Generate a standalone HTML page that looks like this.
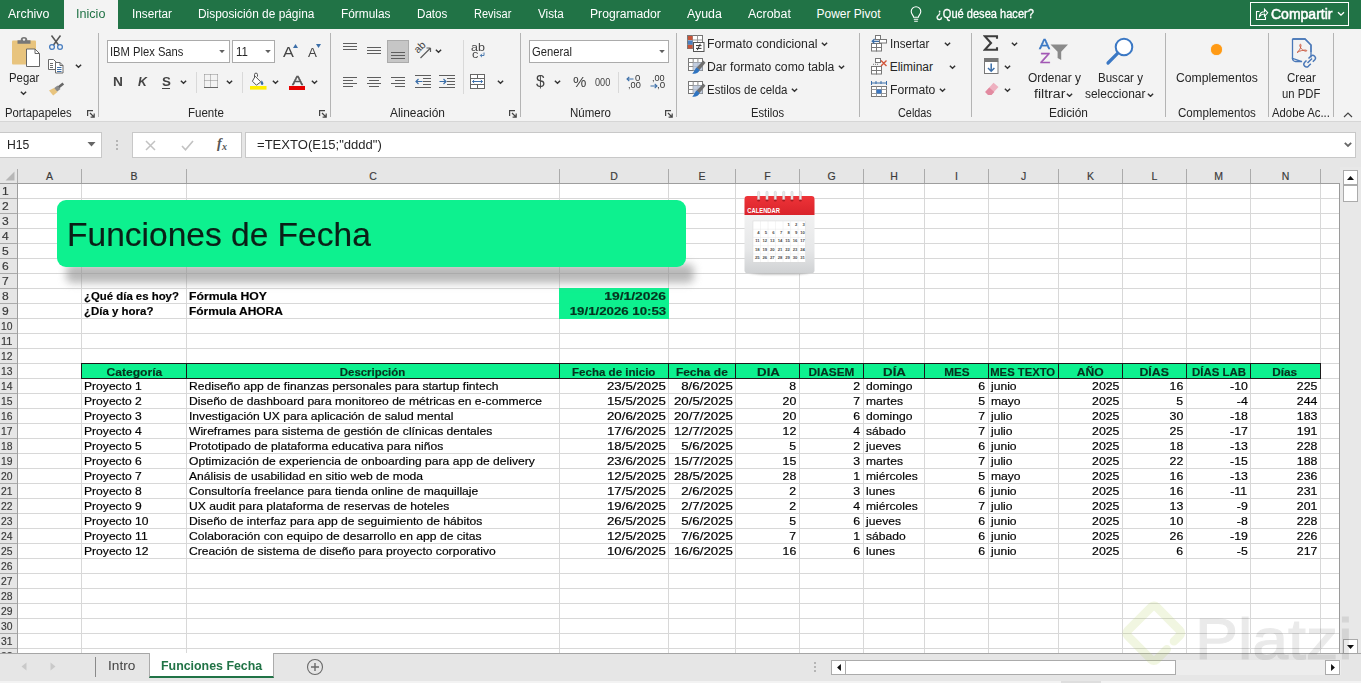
<!DOCTYPE html>
<html lang="es"><head><meta charset="utf-8"><title>Funciones de Fecha - Excel</title>
<style>
html,body{margin:0;padding:0;width:1361px;height:683px;overflow:hidden;background:#fff;font-family:"Liberation Sans",sans-serif;color:#262626}
div,span,svg{position:absolute;box-sizing:border-box}
.t{white-space:pre;line-height:16px;height:16px;font-size:12px}
#tabs{left:0;top:0;width:1361px;height:29px;background:#217346}
#tabs .t{color:#fff}
#tabon{left:64px;top:0;width:54px;height:29px;background:#f3f3f3}
#ribbon{left:0;top:29px;width:1361px;height:93px;background:#f3f3f3;border-bottom:1px solid #d6d6d6}
#fbar{left:0;top:122px;width:1361px;height:45px;background:#e6e6e6}
.wbox{background:#fff;border:1px solid #c8c8c8}
.ibox{background:#fff;border:1px solid #ababab}
.vsep{width:1px;background:#c6c6c6;top:33px;height:84px}
.vsep2{width:1px;background:#d4d4d4}
#colhdr{left:0;top:167px;width:1340px;height:17px;background:#e6e6e6;border-bottom:1px solid #9e9e9e}
#rowhdr{left:0;top:184px;width:18px;height:469px;background:#e6e6e6;border-right:1px solid #9e9e9e}
#grid{left:18px;top:184px;width:1322px;height:469px;background:#fff;overflow:hidden}
.hl{left:0;width:1322px;height:1px;background:#d8d8d8}
.vl{top:0;width:1px;height:469px;background:#d8d8d8}
.ch{color:#3b3b3b}
.cs{width:1px;top:3px;height:14px;background:#ababab}
.rs{left:0;width:17px;height:1px;background:#ababab}
#sheet .t{color:#000;-webkit-text-stroke-width:.18px}
.hc{background:#0df18f;border:1px solid #111;height:16px;top:363px}
#vscroll{left:1340px;top:167px;width:21px;height:486px;background:#e8e8e8}
#btm{left:0;top:653px;width:1361px;height:28px;background:#e6e6e6;border-top:1px solid #a6a6a6}
#status{left:0;top:681px;width:1361px;height:2px;background:#f3f3f3}
.sbtn{background:#fff;border:1px solid #ababab}
#sheet{position:static}

</style></head>
<body>
<div id="tabs"></div><div id="tabon"></div>
<span class="t" style="left:7.5px;transform-origin:0 50%;top:6.0px;font-size:12px;transform:scaleX(1.035);color:#fff;">Archivo</span>
<span class="t" style="left:75.5px;transform-origin:0 50%;top:6.0px;font-size:12px;transform:scaleX(1.049);color:#217346;">Inicio</span>
<span class="t" style="left:131.5px;transform-origin:0 50%;top:6.0px;font-size:12px;transform:scaleX(0.981);color:#fff;">Insertar</span>
<span class="t" style="left:198.0px;transform-origin:0 50%;top:6.0px;font-size:12px;transform:scaleX(0.991);color:#fff;">Disposición de página</span>
<span class="t" style="left:341.0px;transform-origin:0 50%;top:6.0px;font-size:12px;transform:scaleX(0.988);color:#fff;">Fórmulas</span>
<span class="t" style="left:417.0px;transform-origin:0 50%;top:6.0px;font-size:12px;transform:scaleX(0.969);color:#fff;">Datos</span>
<span class="t" style="left:474.0px;transform-origin:0 50%;top:6.0px;font-size:12px;transform:scaleX(0.919);color:#fff;">Revisar</span>
<span class="t" style="left:537.5px;transform-origin:0 50%;top:6.0px;font-size:12px;transform:scaleX(0.979);color:#fff;">Vista</span>
<span class="t" style="left:590.0px;transform-origin:0 50%;top:6.0px;font-size:12px;transform:scaleX(1.012);color:#fff;">Programador</span>
<span class="t" style="left:686.5px;transform-origin:0 50%;top:6.0px;font-size:12px;transform:scaleX(1.032);color:#fff;">Ayuda</span>
<span class="t" style="left:747.5px;transform-origin:0 50%;top:6.0px;font-size:12px;transform:scaleX(1.037);color:#fff;">Acrobat</span>
<span class="t" style="left:816.5px;transform-origin:0 50%;top:6.0px;font-size:12px;color:#fff;">Power Pivot</span>
<span class="t" style="left:935.5px;transform-origin:0 50%;top:6.0px;font-size:12px;transform:scaleX(0.923);color:#fff;-webkit-text-stroke:.3px #fff">¿Qué desea hacer?</span>
<svg style="left:909px;top:5px" width="14" height="18" viewBox="0 0 14 18" fill="none" stroke="#fff" stroke-width="1.1"><path d="M4.6 12.2c0-1.6-2.4-2.8-2.4-5.6a4.8 4.8 0 0 1 9.6 0c0 2.8-2.4 4-2.4 5.6z"/><path d="M4.8 14.2h4.4M5.2 16.2h3.6"/></svg>
<div style="left:1250px;top:2px;width:99px;height:24px;border:1px solid #fff"></div>
<svg style="left:1255px;top:7px" width="14" height="14" viewBox="0 0 14 14" fill="none" stroke="#fff" stroke-width="1.1"><path d="M4.5 4.5H1.5v8h9V9.5"/><path d="M4.5 9.5c.3-3 2-4.8 5-4.8V2.2l3.2 3.6-3.2 3.6V7c-2.2 0-3.8.8-5 2.5z"/></svg>
<span class="t" style="left:1270.9px;transform-origin:0 50%;top:6.0px;font-size:14.5px;transform:scaleX(0.966);color:#fff;-webkit-text-stroke:.55px #fff">Compartir</span>
<svg style="left:1337px;top:11px" width="8" height="6" viewBox="0 0 8 6" fill="none" stroke="#fff" stroke-width="1.3"><path d="M1 1.2l3 3 3-3"/></svg>
<div id="fbar"></div>
<div class="wbox" style="left:-1px;top:132px;width:103px;height:26px"></div>
<span class="t" style="left:7.3px;transform-origin:0 50%;top:137.0px;font-size:12.5px;transform:scaleX(0.977);color:#262626">H15</span>
<svg style="left:87px;top:142px" width="9" height="5" viewBox="0 0 9 5"><path d="M0.5 0h8L4.5 4.5z" fill="#666"/></svg>
<div style="left:116px;top:140px;width:2px;height:2px;background:#b5b5b5"></div>
<div style="left:116px;top:144px;width:2px;height:2px;background:#b5b5b5"></div>
<div style="left:116px;top:148px;width:2px;height:2px;background:#b5b5b5"></div>
<div class="wbox" style="left:132px;top:132px;width:110px;height:26px"></div>
<svg style="left:145px;top:140px" width="11" height="11" viewBox="0 0 11 11" stroke="#c2c2c2" stroke-width="1.5" fill="none"><path d="M1 1l9 9M10 1l-9 9"/></svg>
<svg style="left:181px;top:140px" width="13" height="11" viewBox="0 0 13 11" stroke="#c2c2c2" stroke-width="1.6" fill="none"><path d="M1 6l3.5 3.8L12 1"/></svg>
<span class="t" style="left:217px;top:136px;font-family:'Liberation Serif',serif;font-style:italic;font-size:14px;color:#555;font-weight:bold">f</span>
<span class="t" style="left:222px;top:139px;font-family:'Liberation Serif',serif;font-style:italic;font-size:10px;color:#555;font-weight:bold">x</span>
<div class="wbox" style="left:245px;top:132px;width:1111px;height:26px"></div>
<span class="t" style="left:256.5px;transform-origin:0 50%;top:137.0px;font-size:12.5px;transform:scaleX(1.045);color:#262626">=TEXTO(E15;&quot;dddd&quot;)</span>
<svg style="left:1343.500px;top:142px" width="8" height="5.600" viewBox="0 0 10 7" fill="none" stroke="#666" stroke-width="2.200"><path d="M1 1l4 4 4-4"/></svg><div id="ribbon"></div>
<svg style="left:10.0px;top:35.0px" width="32" height="34" viewBox="0 0 32 34"><rect x="2" y="5.5" width="24" height="24" rx="1" fill="#e8c47e"/><path d="M7.5 8.8V5.2h3.2a3.3 3.3 0 0 1 6.6 0h3.2v3.6z" fill="#777"/><circle cx="14" cy="4.6" r="1.2" fill="#f3f3f3"/><path d="M16.5 14h8.5l4.5 4.5V31.5H16.5z" fill="#fff" stroke="#666" stroke-width="1"/><path d="M25 14v4.5h4.5" fill="none" stroke="#666" stroke-width="1"/></svg>
<span class="t" style="left:9.1px;transform-origin:0 50%;top:70.3px;font-size:12px;transform:scaleX(0.946);color:#262626;">Pegar</span>
<svg style="left:20.3px;top:91.3px" width="7" height="4.400" viewBox="0 0 8 5" fill="none" stroke="#333" stroke-width="1.600"><path d="M1 0.8l3 3 3-3"/></svg>
<svg style="left:48.0px;top:34.0px" width="16" height="17" viewBox="0 0 16 17"><path d="M3.5 1.5l7.2 9.8M12.5 1.5L5.3 11.3" stroke="#555" stroke-width="1.5" fill="none"/><circle cx="4" cy="13" r="2.4" fill="none" stroke="#4a7fc1" stroke-width="1.3"/><circle cx="12" cy="13" r="2.4" fill="none" stroke="#4a7fc1" stroke-width="1.3"/></svg>
<svg style="left:48.0px;top:59.0px" width="17" height="16" viewBox="0 0 17 16"><path d="M0.500 0.500h5l2.500 2.500v7.500h-7.500z" fill="#fff" stroke="#6a6a6a" stroke-width="1"/><path d="M2 4.500h3M2 6.500h3M2 8.500h3" stroke="#6a6a6a" stroke-width="1"/><path d="M7.500 3.500h4.500l3 3v7.500h-7.500z" fill="#fff" stroke="#6a6a6a" stroke-width="1"/><path d="M12 3.500v3h3" fill="none" stroke="#6a6a6a" stroke-width="1"/><path d="M9 8.500h4.500M9 10.500h4.500M9 12.500h4.500" stroke="#3b6ea8" stroke-width="1"/></svg>
<svg style="left:75.2px;top:64.3px" width="7" height="4.400" viewBox="0 0 8 5" fill="none" stroke="#333" stroke-width="1.600"><path d="M1 0.8l3 3 3-3"/></svg>
<svg style="left:48.0px;top:81.0px" width="17" height="16" viewBox="0 0 17 16"><path d="M9.5 5.5l5-4 1.6 2-5 4z" fill="#666"/><path d="M6 7.2l3.5-2.8 3 3.6L9 10.8z" fill="#8a8a8a"/><path d="M1 9.5l5-2.6 3.5 4.2L5.2 14.5z" fill="#e8c47e"/></svg>
<span class="t" style="left:5.3px;transform-origin:0 50%;top:105.4px;font-size:12px;transform:scaleX(0.943);color:#262626;">Portapapeles</span>
<svg style="left:87.0px;top:109.5px" width="8" height="8" viewBox="0 0 8 8" fill="none" stroke="#444" stroke-width="1.2"><path d="M0.6 6V0.6H6"/><path d="M3 3l4 4M7.2 3.6V7.2H3.6"/></svg>
<div style="left:98px;top:33px;width:1px;height:84px;background:#b4b4b4"></div>
<div class="ibox" style="left:107px;top:40px;width:123px;height:23px"></div>
<span class="t" style="left:110.0px;transform-origin:0 50%;top:43.5px;font-size:12px;transform:scaleX(0.933);color:#262626;">IBM Plex Sans</span>
<svg style="left:219.0px;top:49.8px" width="6" height="3.400" viewBox="0 0 7 4"><path d="M0.200 0h6.600L3.5 3.700z" fill="#606060"/></svg>
<div class="ibox" style="left:232px;top:40px;width:43px;height:23px"></div>
<span class="t" style="left:235.5px;transform-origin:0 50%;top:43.5px;font-size:12px;transform:scaleX(0.954);color:#262626;">11</span>
<svg style="left:264.5px;top:49.8px" width="6" height="3.400" viewBox="0 0 7 4"><path d="M0.200 0h6.600L3.5 3.700z" fill="#606060"/></svg>
<span class="t" style="left:282.5px;transform-origin:0 50%;top:44.0px;font-size:15px;transform:scaleX(1.088);color:#444;">A</span>
<svg style="left:292.5px;top:43.5px" width="5" height="4" viewBox="0 0 5 4"><path d="M0 4h5L2.5 0z" fill="#3b6ea8"/></svg>
<span class="t" style="left:307.5px;transform-origin:0 50%;top:45.0px;font-size:12.5px;transform:scaleX(1.067);color:#444;">A</span>
<svg style="left:315.5px;top:44.0px" width="5" height="4" viewBox="0 0 5 4"><path d="M0 0h5L2.5 4z" fill="#3b6ea8"/></svg>
<span class="t" style="left:112.5px;transform-origin:0 50%;top:74.0px;font-size:12.5px;transform:scaleX(1.096);color:#444;font-weight:bold;">N</span>
<span class="t" style="left:137.5px;transform-origin:0 50%;top:74.0px;font-size:12.5px;transform:scaleX(0.985);color:#444;font-weight:bold;font-style:italic;">K</span>
<span class="t" style="left:161.5px;transform-origin:0 50%;top:73.5px;font-size:12.5px;transform:scaleX(1.067);color:#444;font-weight:bold;">S</span>
<div style="left:162px;top:88px;width:8px;height:1px;background:#444"></div>
<svg style="left:180.0px;top:80.3px" width="7" height="4.400" viewBox="0 0 8 5" fill="none" stroke="#333" stroke-width="1.600"><path d="M1 0.8l3 3 3-3"/></svg>
<div style="left:196px;top:72px;width:1px;height:21px;background:#d9d9d9"></div>
<svg style="left:204.0px;top:74.0px" width="15" height="15" viewBox="0 0 15 15"><path d="M0.500 0.500h13M0.500 6.500h13M0.500 0.500v13M6.500 0.500v13M13.500 0.500v13" stroke="#8a8a8a" stroke-width="1" stroke-dasharray="1 1" fill="none"/><path d="M0 13.500h14" stroke="#666" stroke-width="1" fill="none"/></svg>
<svg style="left:226.0px;top:80.3px" width="7" height="4.400" viewBox="0 0 8 5" fill="none" stroke="#333" stroke-width="1.600"><path d="M1 0.8l3 3 3-3"/></svg>
<div style="left:242px;top:72px;width:1px;height:21px;background:#d9d9d9"></div>
<svg style="left:250.0px;top:72.0px" width="18" height="18" viewBox="0 0 18 18"><path d="M5.2 4.3l5.6 5.6-4.4 3.3-4-4z" fill="#fff" stroke="#555" stroke-width="1"/><path d="M4.5 5.5V2.6a1.5 1.5 0 0 1 3 0v2" fill="none" stroke="#555" stroke-width="1"/><path d="M11.6 8.2c1.2 1.6 1.8 2.6 1.8 3.4a1.3 1.3 0 0 1-2.6 0c0-.8.3-1.6.8-3.4z" fill="#3b6ea8"/><rect x="0" y="14" width="16.5" height="3.6" fill="#ffee00"/></svg>
<svg style="left:272.0px;top:80.3px" width="7" height="4.400" viewBox="0 0 8 5" fill="none" stroke="#333" stroke-width="1.600"><path d="M1 0.8l3 3 3-3"/></svg>
<span class="t" style="left:291.8px;transform-origin:0 50%;top:72.8px;font-size:12.5px;transform:scaleX(1.318);color:#555;-webkit-text-stroke:.4px #555;">A</span>
<div style="left:289px;top:86px;width:16px;height:4px;background:#e60000"></div>
<svg style="left:311.0px;top:80.3px" width="7" height="4.400" viewBox="0 0 8 5" fill="none" stroke="#333" stroke-width="1.600"><path d="M1 0.8l3 3 3-3"/></svg>
<span class="t" style="left:188.0px;transform-origin:0 50%;top:105.4px;font-size:12px;transform:scaleX(0.961);color:#262626;">Fuente</span>
<svg style="left:319.0px;top:109.5px" width="8" height="8" viewBox="0 0 8 8" fill="none" stroke="#444" stroke-width="1.2"><path d="M0.6 6V0.6H6"/><path d="M3 3l4 4M7.2 3.6V7.2H3.6"/></svg>
<div style="left:330px;top:33px;width:1px;height:84px;background:#b4b4b4"></div>
<div style="left:343.0px;top:43.0px;width:14.0px;height:1px;background:#5e5e5e"></div><div style="left:343.0px;top:46.0px;width:14.0px;height:1px;background:#5e5e5e"></div><div style="left:343.0px;top:49.0px;width:14.0px;height:1px;background:#5e5e5e"></div>
<div style="left:367.0px;top:47.0px;width:14.0px;height:1px;background:#5e5e5e"></div><div style="left:367.0px;top:50.0px;width:14.0px;height:1px;background:#5e5e5e"></div><div style="left:367.0px;top:53.0px;width:14.0px;height:1px;background:#5e5e5e"></div>
<div style="left:387px;top:40px;width:22px;height:23px;background:#c6c6c6;border:1px solid #ababab"></div>
<div style="left:391.0px;top:52.0px;width:14.0px;height:1px;background:#5e5e5e"></div><div style="left:391.0px;top:55.0px;width:14.0px;height:1px;background:#5e5e5e"></div><div style="left:391.0px;top:58.0px;width:14.0px;height:1px;background:#5e5e5e"></div>
<svg style="left:413.0px;top:41.0px" width="20" height="20" viewBox="0 0 20 20"><text x="0" y="0" font-family="Liberation Sans, sans-serif" font-size="10.5" fill="#444" transform="translate(5 12.8) rotate(-45)">ab</text><path d="M7.5 17L17.5 7M17.5 7h-4M17.5 7v4" stroke="#5e5e5e" stroke-width="1.2" fill="none"/></svg>
<svg style="left:435.0px;top:49.3px" width="7" height="4.400" viewBox="0 0 8 5" fill="none" stroke="#333" stroke-width="1.600"><path d="M1 0.8l3 3 3-3"/></svg>
<div style="left:463px;top:40px;width:1px;height:54px;background:#d9d9d9"></div>
<span class="t" style="left:471.0px;transform-origin:0 50%;top:40.5px;font-size:10.5px;height:12px;line-height:12px;transform:scaleX(1.189);color:#444;">ab</span>
<span class="t" style="left:472.0px;transform-origin:0 50%;top:48.0px;font-size:10.5px;height:12px;line-height:12px;transform:scaleX(1.219);color:#444;">c</span>
<svg style="left:479.0px;top:51.5px" width="6" height="6" viewBox="0 0 6 6"><path d="M5 0.5v3H1.5M3 1.800L1.300 3.500 3 5.200" stroke="#3b6ea8" stroke-width=".9" fill="none"/></svg>
<div style="left:343.0px;top:77.0px;width:14.0px;height:1px;background:#5e5e5e"></div><div style="left:343.0px;top:80.0px;width:10.0px;height:1px;background:#5e5e5e"></div><div style="left:343.0px;top:83.0px;width:14.0px;height:1px;background:#5e5e5e"></div><div style="left:343.0px;top:86.0px;width:10.0px;height:1px;background:#5e5e5e"></div>
<div style="left:367.0px;top:77.0px;width:14.0px;height:1px;background:#5e5e5e"></div><div style="left:369.0px;top:80.0px;width:10.0px;height:1px;background:#5e5e5e"></div><div style="left:367.0px;top:83.0px;width:14.0px;height:1px;background:#5e5e5e"></div><div style="left:369.0px;top:86.0px;width:10.0px;height:1px;background:#5e5e5e"></div>
<div style="left:391.0px;top:77.0px;width:14.0px;height:1px;background:#5e5e5e"></div><div style="left:395.0px;top:80.0px;width:10.0px;height:1px;background:#5e5e5e"></div><div style="left:391.0px;top:83.0px;width:14.0px;height:1px;background:#5e5e5e"></div><div style="left:395.0px;top:86.0px;width:10.0px;height:1px;background:#5e5e5e"></div>
<div style="left:415.0px;top:75.0px;width:16.0px;height:1px;background:#5e5e5e"></div><div style="left:423.0px;top:78.0px;width:8.0px;height:1px;background:#5e5e5e"></div><div style="left:423.0px;top:81.0px;width:8.0px;height:1px;background:#5e5e5e"></div><div style="left:423.0px;top:84.0px;width:8.0px;height:1px;background:#5e5e5e"></div><div style="left:415.0px;top:87.0px;width:16.0px;height:1px;background:#5e5e5e"></div>
<svg style="left:415.0px;top:78.0px" width="8" height="7" viewBox="0 0 8 7"><path d="M7.5 3.5H1.2M3.5 1L1 3.5 3.5 6" stroke="#3b6ea8" stroke-width="1.2" fill="none"/></svg>
<div style="left:439.0px;top:75.0px;width:16.0px;height:1px;background:#5e5e5e"></div><div style="left:447.0px;top:78.0px;width:8.0px;height:1px;background:#5e5e5e"></div><div style="left:447.0px;top:81.0px;width:8.0px;height:1px;background:#5e5e5e"></div><div style="left:447.0px;top:84.0px;width:8.0px;height:1px;background:#5e5e5e"></div><div style="left:439.0px;top:87.0px;width:16.0px;height:1px;background:#5e5e5e"></div>
<svg style="left:439.0px;top:78.0px" width="8" height="7" viewBox="0 0 8 7"><path d="M0.5 3.5h6.3M4.5 1L7 3.5 4.5 6" stroke="#3b6ea8" stroke-width="1.2" fill="none"/></svg>
<svg style="left:470.0px;top:74.0px" width="16" height="16" viewBox="0 0 16 16"><rect x="0.5" y="0.5" width="14" height="14" fill="#fff" stroke="#666" stroke-width="1"/><path d="M0.5 4.5h14M0.5 10.5h14M7.500 0.5v4M7.500 10.5v4" stroke="#666" stroke-width="1" fill="none"/><path d="M2.5 7.5h10M4.2 6L2.5 7.5l1.7 1.5M10.8 6l1.7 1.5-1.7 1.5" stroke="#3b6ea8" stroke-width="1" fill="none"/></svg>
<svg style="left:497.0px;top:80.3px" width="7" height="4.400" viewBox="0 0 8 5" fill="none" stroke="#333" stroke-width="1.600"><path d="M1 0.8l3 3 3-3"/></svg>
<span class="t" style="left:389.5px;transform-origin:0 50%;top:105.4px;font-size:12px;transform:scaleX(0.991);color:#262626;">Alineación</span>
<svg style="left:509.0px;top:109.5px" width="8" height="8" viewBox="0 0 8 8" fill="none" stroke="#444" stroke-width="1.2"><path d="M0.6 6V0.6H6"/><path d="M3 3l4 4M7.2 3.6V7.2H3.6"/></svg>
<div style="left:520px;top:33px;width:1px;height:84px;background:#b4b4b4"></div>
<div class="ibox" style="left:529px;top:40px;width:140px;height:23px"></div>
<span class="t" style="left:532.0px;transform-origin:0 50%;top:43.5px;font-size:12px;transform:scaleX(0.934);color:#262626;">General</span>
<svg style="left:658.5px;top:49.8px" width="6" height="3.400" viewBox="0 0 7 4"><path d="M0.200 0h6.600L3.5 3.700z" fill="#606060"/></svg>
<span class="t" style="left:536.3px;transform-origin:0 50%;top:74.0px;font-size:16px;transform:scaleX(0.977);color:#444;">$</span>
<svg style="left:554.0px;top:80.3px" width="7" height="4.400" viewBox="0 0 8 5" fill="none" stroke="#333" stroke-width="1.600"><path d="M1 0.8l3 3 3-3"/></svg>
<span class="t" style="left:573.0px;transform-origin:0 50%;top:74.0px;font-size:14px;transform:scaleX(1.076);color:#444;">%</span>
<span class="t" style="left:595.1px;transform-origin:0 50%;top:73.6px;font-size:10.5px;transform:scaleX(0.873);color:#444;">000</span>
<div style="left:618px;top:72px;width:1px;height:21px;background:#d9d9d9"></div>
<span class="t" style="left:635.3px;transform-origin:0 50%;top:73.4px;font-size:9.3px;height:10px;line-height:10px;transform:scaleX(1.025);color:#333;">0</span>
<span class="t" style="left:627.8px;transform-origin:0 50%;top:80.4px;font-size:9.3px;height:10px;line-height:10px;transform:scaleX(0.989);color:#333;">,00</span>
<svg style="left:626.0px;top:75.7px" width="8" height="6" viewBox="0 0 8 6"><path d="M7.5 3H1.2M3.3 0.8L1 3l2.3 2.2" stroke="#3b6ea8" stroke-width="1.1" fill="none"/></svg>
<span class="t" style="left:652.0px;transform-origin:0 50%;top:73.4px;font-size:9.3px;height:10px;line-height:10px;transform:scaleX(0.982);color:#333;">,00</span>
<span class="t" style="left:656.5px;transform-origin:0 50%;top:80.4px;font-size:9.3px;height:10px;line-height:10px;transform:scaleX(1.056);color:#333;">,0</span>
<svg style="left:649.8px;top:82.5px" width="8" height="6" viewBox="0 0 8 6"><path d="M0.5 3h6.3M4.7 0.8L7 3 4.7 5.2" stroke="#3b6ea8" stroke-width="1.1" fill="none"/></svg>
<span class="t" style="left:570.0px;transform-origin:0 50%;top:105.4px;font-size:12px;transform:scaleX(0.958);color:#262626;">Número</span>
<svg style="left:665.0px;top:109.5px" width="8" height="8" viewBox="0 0 8 8" fill="none" stroke="#444" stroke-width="1.2"><path d="M0.6 6V0.6H6"/><path d="M3 3l4 4M7.2 3.6V7.2H3.6"/></svg>
<div style="left:676px;top:33px;width:1px;height:84px;background:#b4b4b4"></div>
<svg style="left:687.0px;top:35.0px" width="18" height="17" viewBox="0 0 18 17"><rect x="0.5" y="0.5" width="15" height="13" fill="#fff" stroke="#777" stroke-width="1"/><path d="M0.5 5h15M0.5 9.5h15M5.5 0.5v13M10.5 0.5v13" stroke="#999" stroke-width="1"/><rect x="1" y="1" width="4.5" height="4" fill="#c8553a"/><rect x="1" y="5.500" width="4.500" height="4" fill="#4a7fc1"/><rect x="1" y="10" width="4.500" height="3.500" fill="#c8553a"/><rect x="6.5" y="7.5" width="10.5" height="9" fill="#fff" stroke="#555" stroke-width="1"/><path d="M9 10.6h5.5M9 13.4h5.5M13.3 8.8l-3 6.4" stroke="#333" stroke-width="1" fill="none"/></svg>
<span class="t" style="left:707.0px;transform-origin:0 50%;top:35.7px;font-size:12px;transform:scaleX(1.022);color:#262626;">Formato condicional</span>
<svg style="left:820.5px;top:42.3px" width="7" height="4.400" viewBox="0 0 8 5" fill="none" stroke="#333" stroke-width="1.600"><path d="M1 0.8l3 3 3-3"/></svg>
<svg style="left:687.5px;top:57.5px" width="19" height="19" viewBox="0 0 19 19"><rect x="0.5" y="0.5" width="14" height="12" fill="#fff" stroke="#777" stroke-width="1"/><path d="M0.5 4.5h14M0.5 8.5h14M5.2 0.5v12M9.900 0.500v12" stroke="#8a8a8a" stroke-width="1"/><path d="M5.200 4.500h9.300v8h-9.300z" fill="#b8c6da" opacity=".85"/><path d="M15.300 2.600l2.200 2.200-6.200 7.400-2.800-2.400z" fill="#6f6f6f"/><path d="M8.800 9.600l2.800 2.500c-.6 2.700-4.400 4.300-7.400 3.400 1.900-.8 2.500-4.700 4.600-5.900z" fill="#2f74c0"/></svg>
<span class="t" style="left:707.0px;transform-origin:0 50%;top:58.7px;font-size:12px;transform:scaleX(1.016);color:#262626;">Dar formato como tabla</span>
<svg style="left:837.5px;top:65.3px" width="7" height="4.400" viewBox="0 0 8 5" fill="none" stroke="#333" stroke-width="1.600"><path d="M1 0.8l3 3 3-3"/></svg>
<svg style="left:687.5px;top:81.0px" width="19" height="19" viewBox="0 0 19 19"><rect x="0.5" y="0.5" width="14" height="12" fill="#fff" stroke="#777" stroke-width="1"/><path d="M0.5 4.5h14M0.5 8.5h14M5.2 0.5v12M9.900 0.500v12" stroke="#8a8a8a" stroke-width="1"/><path d="M5.200 4.500h9.300v8h-9.300z" fill="#b8c6da" opacity=".85"/><path d="M15.300 2.600l2.200 2.200-6.200 7.400-2.800-2.400z" fill="#6f6f6f"/><path d="M8.800 9.600l2.800 2.500c-.6 2.700-4.400 4.300-7.400 3.400 1.900-.8 2.500-4.700 4.600-5.900z" fill="#2f74c0"/></svg>
<span class="t" style="left:707.0px;transform-origin:0 50%;top:82.0px;font-size:12px;transform:scaleX(0.957);color:#262626;">Estilos de celda</span>
<svg style="left:790.5px;top:88.3px" width="7" height="4.400" viewBox="0 0 8 5" fill="none" stroke="#333" stroke-width="1.600"><path d="M1 0.8l3 3 3-3"/></svg>
<span class="t" style="left:750.9px;transform-origin:0 50%;top:105.4px;font-size:12px;transform:scaleX(0.934);color:#262626;">Estilos</span>
<div style="left:859px;top:33px;width:1px;height:84px;background:#b4b4b4"></div>
<svg style="left:871.0px;top:35.0px" width="17" height="17" viewBox="0 0 17 17"><rect x="4.5" y="0.5" width="5" height="4" fill="#fff" stroke="#777"/><rect x="0.5" y="8.5" width="5" height="4" fill="#fff" stroke="#777"/><rect x="5.5" y="8.5" width="5" height="4" fill="#fff" stroke="#777"/><rect x="0.5" y="12.5" width="5" height="3.5" fill="#fff" stroke="#777"/><rect x="5.5" y="12.5" width="5" height="3.5" fill="#fff" stroke="#777"/><rect x="8.5" y="4.5" width="7" height="3.5" fill="#fff" stroke="#777"/><path d="M8 6.3H1.2M3.6 4L1.2 6.3l2.4 2.3" stroke="#3b6ea8" stroke-width="1.2" fill="none"/></svg>
<span class="t" style="left:889.7px;transform-origin:0 50%;top:35.7px;font-size:12px;transform:scaleX(0.966);color:#262626;">Insertar</span>
<svg style="left:944.0px;top:42.3px" width="7" height="4.400" viewBox="0 0 8 5" fill="none" stroke="#333" stroke-width="1.600"><path d="M1 0.8l3 3 3-3"/></svg>
<svg style="left:871.0px;top:58.0px" width="17" height="17" viewBox="0 0 17 17"><rect x="4.5" y="0.5" width="5" height="4" fill="#fff" stroke="#777"/><rect x="0.5" y="8.5" width="5" height="4" fill="#fff" stroke="#777"/><rect x="5.5" y="8.5" width="5" height="4" fill="#fff" stroke="#777"/><rect x="0.5" y="12.5" width="5" height="3.5" fill="#fff" stroke="#777"/><rect x="5.5" y="12.5" width="5" height="3.5" fill="#fff" stroke="#777"/><path d="M10 2.5l5.5 5.5M15.5 2.5L10 8" stroke="#d2553a" stroke-width="1.4" fill="none"/><path d="M2 6.3h5" stroke="#777" stroke-width="1" stroke-dasharray="1 1"/></svg>
<span class="t" style="left:889.7px;transform-origin:0 50%;top:58.7px;font-size:12px;color:#262626;">Eliminar</span>
<svg style="left:948.5px;top:65.3px" width="7" height="4.400" viewBox="0 0 8 5" fill="none" stroke="#333" stroke-width="1.600"><path d="M1 0.8l3 3 3-3"/></svg>
<svg style="left:871.0px;top:80.0px" width="17" height="18" viewBox="0 0 17 18"><path d="M0.5 1v4M15.5 1v4M0.5 3h15" stroke="#3b6ea8" stroke-width="1" fill="none"/><path d="M5 1v3M10 1v3" stroke="#3b6ea8" stroke-width="1"/><rect x="0.5" y="6.5" width="15" height="10" fill="#fff" stroke="#777"/><path d="M0.5 9.5h15M0.5 13.5h15M5.5 6.5v10M10.5 6.5v10" stroke="#999" stroke-width="1"/><rect x="5.5" y="9.5" width="5" height="4" fill="#3b78c4"/></svg>
<span class="t" style="left:889.7px;transform-origin:0 50%;top:82.0px;font-size:12px;transform:scaleX(1.014);color:#262626;">Formato</span>
<svg style="left:938.5px;top:88.3px" width="7" height="4.400" viewBox="0 0 8 5" fill="none" stroke="#333" stroke-width="1.600"><path d="M1 0.8l3 3 3-3"/></svg>
<span class="t" style="left:897.9px;transform-origin:0 50%;top:105.4px;font-size:12px;transform:scaleX(0.905);color:#262626;">Celdas</span>
<div style="left:971px;top:33px;width:1px;height:84px;background:#b4b4b4"></div>
<svg style="left:983.0px;top:34.5px" width="16" height="16" viewBox="0 0 16 16"><path d="M14 3.800V1.200H1.800l6.200 6.800-6.200 6.800H14v-2.600" fill="none" stroke="#3d3d3d" stroke-width="2.100" stroke-linejoin="miter"/></svg>
<svg style="left:1010.5px;top:42.3px" width="7" height="4.400" viewBox="0 0 8 5" fill="none" stroke="#333" stroke-width="1.600"><path d="M1 0.8l3 3 3-3"/></svg>
<svg style="left:984.0px;top:58.0px" width="15" height="17" viewBox="0 0 15 17"><rect x="0.5" y="3.5" width="13.5" height="12" fill="#fff" stroke="#777"/><rect x="0" y="0" width="14.5" height="3.5" fill="#777"/><path d="M7.2 5.5v7.5M4 10l3.2 3.2 3.2-3.2" stroke="#3b6ea8" stroke-width="1.5" fill="none"/></svg>
<svg style="left:1003.5px;top:65.3px" width="7" height="4.400" viewBox="0 0 8 5" fill="none" stroke="#333" stroke-width="1.600"><path d="M1 0.8l3 3 3-3"/></svg>
<svg style="left:984.0px;top:82.0px" width="16" height="14" viewBox="0 0 16 14"><path d="M9.5 0.8l5 4.2-7 7.6H4L1.2 10z" fill="#eeb1c0"/><path d="M5.3 5.6l5 4.3-2.8 3H4L1.2 10z" fill="#e28aa0"/></svg>
<svg style="left:1003.5px;top:88.3px" width="7" height="4.400" viewBox="0 0 8 5" fill="none" stroke="#333" stroke-width="1.600"><path d="M1 0.8l3 3 3-3"/></svg>
<span class="t" style="left:1039.3px;transform-origin:0 50%;top:36.2px;font-size:15px;transform:scaleX(1.108);color:#3b78c4;-webkit-text-stroke:.4px #3b78c4;">A</span>
<span class="t" style="left:1039.8px;transform-origin:0 50%;top:49.9px;font-size:15px;transform:scaleX(1.134);color:#a359b5;-webkit-text-stroke:.4px #a359b5;">Z</span>
<svg style="left:1050.0px;top:44.0px" width="19" height="18" viewBox="0 0 19 18"><path d="M0.5 0.5h17.5l-6.8 7.2v8.3l-3.6-2V7.7z" fill="#8a8a8a"/></svg>
<span class="t" style="left:1027.5px;transform-origin:0 50%;top:70.0px;font-size:12px;transform:scaleX(0.991);color:#262626;">Ordenar y</span>
<span class="t" style="left:1034.0px;transform-origin:0 50%;top:86.0px;font-size:12px;transform:scaleX(1.177);color:#262626;">filtrar</span>
<svg style="left:1066.0px;top:92.8px" width="7" height="4.400" viewBox="0 0 8 5" fill="none" stroke="#333" stroke-width="1.600"><path d="M1 0.8l3 3 3-3"/></svg>
<svg style="left:1105.0px;top:36.0px" width="30" height="30" viewBox="0 0 30 30"><circle cx="19" cy="11" r="8.3" fill="#fff" stroke="#3b78c4" stroke-width="2"/><path d="M12.8 17.2L3 27" stroke="#3b78c4" stroke-width="3.2" stroke-linecap="round"/></svg>
<span class="t" style="left:1097.5px;transform-origin:0 50%;top:70.0px;font-size:12px;transform:scaleX(0.962);color:#262626;">Buscar y</span>
<span class="t" style="left:1084.5px;transform-origin:0 50%;top:86.0px;font-size:12px;transform:scaleX(0.995);color:#262626;">seleccionar</span>
<svg style="left:1147.0px;top:92.8px" width="7" height="4.400" viewBox="0 0 8 5" fill="none" stroke="#333" stroke-width="1.600"><path d="M1 0.8l3 3 3-3"/></svg>
<span class="t" style="left:1048.5px;transform-origin:0 50%;top:105.4px;font-size:12px;transform:scaleX(0.988);color:#262626;">Edición</span>
<div style="left:1165px;top:33px;width:1px;height:84px;background:#b4b4b4"></div>
<div style="left:1210.5px;top:44px;width:11px;height:11px;border-radius:6px;background:#ff9a14;box-shadow:0 0 1px #ffb24a"></div>
<span class="t" style="left:1176.1px;transform-origin:0 50%;top:70.0px;font-size:12px;transform:scaleX(1.015);color:#262626;">Complementos</span>
<span class="t" style="left:1177.5px;transform-origin:0 50%;top:105.4px;font-size:12px;transform:scaleX(0.965);color:#262626;">Complementos</span>
<div style="left:1268px;top:33px;width:1px;height:84px;background:#b4b4b4"></div>
<svg style="left:1291.0px;top:38.0px" width="28" height="30" viewBox="0 0 28 30"><path d="M1.5 1h12.5l6 6v12.5M11 23.5H4.5a3 3 0 0 1-3-3z" fill="none" stroke="#4a78b8" stroke-width="1.3"/><path d="M1.5 1h12.5l6 6V14" fill="none" stroke="#4a78b8" stroke-width="1.3"/><path d="M1.5 1v20" stroke="#4a78b8" stroke-width="1.3"/><path d="M6 14.5c2.5-1.5 4-5 4-7.5 0-1-1.2-1-1.2 0 0 2.5 2.5 5.8 6.200 6.200 1 .1 1-1 0-1.100-2.500-.2-6 .6-9 2.400z" fill="none" stroke="#c8553a" stroke-width=".9"/><path d="M15.5 22.5l-2 2a2.700 2.700 0 0 0 3.800 3.800l2.500-2.500M17.500 20.500l2.500-2.500a2.700 2.700 0 0 1 3.800 3.800l-2 2M16.500 25l4.500-4.500" fill="none" stroke="#4a78b8" stroke-width="1.500"/></svg>
<span class="t" style="left:1286.5px;transform-origin:0 50%;top:70.0px;font-size:12px;transform:scaleX(0.963);color:#262626;">Crear</span>
<span class="t" style="left:1282.1px;transform-origin:0 50%;top:86.0px;font-size:12px;transform:scaleX(0.941);color:#262626;">un PDF</span>
<span class="t" style="left:1271.5px;transform-origin:0 50%;top:105.4px;font-size:12px;transform:scaleX(0.943);color:#262626;">Adobe Ac...</span>
<div style="left:1333px;top:33px;width:1px;height:84px;background:#b4b4b4"></div>
<svg style="left:1342.5px;top:111.5px" width="10" height="6" viewBox="0 0 10 6"><path d="M1 5l4-4 4 4" fill="none" stroke="#444" stroke-width="1.2"/></svg><div id="sheet">
<div id="grid"></div>
<div class="hl" style="left:18px;top:198px"></div>
<div class="hl" style="left:18px;top:213px"></div>
<div class="hl" style="left:18px;top:228px"></div>
<div class="hl" style="left:18px;top:243px"></div>
<div class="hl" style="left:18px;top:258px"></div>
<div class="hl" style="left:18px;top:273px"></div>
<div class="hl" style="left:18px;top:288px"></div>
<div class="hl" style="left:18px;top:303px"></div>
<div class="hl" style="left:18px;top:318px"></div>
<div class="hl" style="left:18px;top:333px"></div>
<div class="hl" style="left:18px;top:348px"></div>
<div class="hl" style="left:18px;top:363px"></div>
<div class="hl" style="left:18px;top:378px"></div>
<div class="hl" style="left:18px;top:393px"></div>
<div class="hl" style="left:18px;top:408px"></div>
<div class="hl" style="left:18px;top:423px"></div>
<div class="hl" style="left:18px;top:438px"></div>
<div class="hl" style="left:18px;top:453px"></div>
<div class="hl" style="left:18px;top:468px"></div>
<div class="hl" style="left:18px;top:483px"></div>
<div class="hl" style="left:18px;top:498px"></div>
<div class="hl" style="left:18px;top:513px"></div>
<div class="hl" style="left:18px;top:528px"></div>
<div class="hl" style="left:18px;top:543px"></div>
<div class="hl" style="left:18px;top:558px"></div>
<div class="hl" style="left:18px;top:573px"></div>
<div class="hl" style="left:18px;top:588px"></div>
<div class="hl" style="left:18px;top:603px"></div>
<div class="hl" style="left:18px;top:618px"></div>
<div class="hl" style="left:18px;top:633px"></div>
<div class="hl" style="left:18px;top:648px"></div>
<div class="vl" style="left:81px;top:184px"></div>
<div class="vl" style="left:186px;top:184px"></div>
<div class="vl" style="left:559px;top:184px"></div>
<div class="vl" style="left:668px;top:184px"></div>
<div class="vl" style="left:735px;top:184px"></div>
<div class="vl" style="left:799px;top:184px"></div>
<div class="vl" style="left:863px;top:184px"></div>
<div class="vl" style="left:924px;top:184px"></div>
<div class="vl" style="left:988px;top:184px"></div>
<div class="vl" style="left:1058px;top:184px"></div>
<div class="vl" style="left:1122px;top:184px"></div>
<div class="vl" style="left:1186px;top:184px"></div>
<div class="vl" style="left:1250px;top:184px"></div>
<div class="vl" style="left:1320px;top:184px"></div>
<div id="colhdr"></div><div id="rowhdr"></div>
<svg style="left:5px;top:171px" width="10" height="10" viewBox="0 0 10 10"><path d="M9.5 0.5v9h-9z" fill="#b7b7b7"/></svg>
<div class="cs" style="left:17px;top:169px"></div>
<div class="cs" style="left:81px;top:169px"></div>
<div class="cs" style="left:186px;top:169px"></div>
<div class="cs" style="left:559px;top:169px"></div>
<div class="cs" style="left:668px;top:169px"></div>
<div class="cs" style="left:735px;top:169px"></div>
<div class="cs" style="left:799px;top:169px"></div>
<div class="cs" style="left:863px;top:169px"></div>
<div class="cs" style="left:924px;top:169px"></div>
<div class="cs" style="left:988px;top:169px"></div>
<div class="cs" style="left:1058px;top:169px"></div>
<div class="cs" style="left:1122px;top:169px"></div>
<div class="cs" style="left:1186px;top:169px"></div>
<div class="cs" style="left:1250px;top:169px"></div>
<div class="cs" style="left:1320px;top:169px"></div>
<span class="t" style="left:44.5px;transform-origin:0 50%;top:168.3px;font-size:10.5px;color:#3b3b3b;width:10px;text-align:center">A</span>
<span class="t" style="left:129.0px;transform-origin:0 50%;top:168.3px;font-size:10.5px;color:#3b3b3b;width:10px;text-align:center">B</span>
<span class="t" style="left:368.0px;transform-origin:0 50%;top:168.3px;font-size:10.5px;color:#3b3b3b;width:10px;text-align:center">C</span>
<span class="t" style="left:609.0px;transform-origin:0 50%;top:168.3px;font-size:10.5px;color:#3b3b3b;width:10px;text-align:center">D</span>
<span class="t" style="left:697.0px;transform-origin:0 50%;top:168.3px;font-size:10.5px;color:#3b3b3b;width:10px;text-align:center">E</span>
<span class="t" style="left:762.5px;transform-origin:0 50%;top:168.3px;font-size:10.5px;color:#3b3b3b;width:10px;text-align:center">F</span>
<span class="t" style="left:826.5px;transform-origin:0 50%;top:168.3px;font-size:10.5px;color:#3b3b3b;width:10px;text-align:center">G</span>
<span class="t" style="left:889.0px;transform-origin:0 50%;top:168.3px;font-size:10.5px;color:#3b3b3b;width:10px;text-align:center">H</span>
<span class="t" style="left:951.5px;transform-origin:0 50%;top:168.3px;font-size:10.5px;color:#3b3b3b;width:10px;text-align:center">I</span>
<span class="t" style="left:1018.5px;transform-origin:0 50%;top:168.3px;font-size:10.5px;color:#3b3b3b;width:10px;text-align:center">J</span>
<span class="t" style="left:1085.5px;transform-origin:0 50%;top:168.3px;font-size:10.5px;color:#3b3b3b;width:10px;text-align:center">K</span>
<span class="t" style="left:1149.5px;transform-origin:0 50%;top:168.3px;font-size:10.5px;color:#3b3b3b;width:10px;text-align:center">L</span>
<span class="t" style="left:1213.5px;transform-origin:0 50%;top:168.3px;font-size:10.5px;color:#3b3b3b;width:10px;text-align:center">M</span>
<span class="t" style="left:1280.5px;transform-origin:0 50%;top:168.3px;font-size:10.5px;color:#3b3b3b;width:10px;text-align:center">N</span>
<div class="rs" style="top:198px"></div>
<span class="t" style="left:2.1px;transform-origin:0 50%;top:183.0px;font-size:10.5px;transform:scaleX(1.147);color:#3b3b3b">1</span>
<div class="rs" style="top:213px"></div>
<span class="t" style="left:2.1px;transform-origin:0 50%;top:198.0px;font-size:10.5px;transform:scaleX(1.147);color:#3b3b3b">2</span>
<div class="rs" style="top:228px"></div>
<span class="t" style="left:2.1px;transform-origin:0 50%;top:213.0px;font-size:10.5px;transform:scaleX(1.147);color:#3b3b3b">3</span>
<div class="rs" style="top:243px"></div>
<span class="t" style="left:2.1px;transform-origin:0 50%;top:228.0px;font-size:10.5px;transform:scaleX(1.147);color:#3b3b3b">4</span>
<div class="rs" style="top:258px"></div>
<span class="t" style="left:2.1px;transform-origin:0 50%;top:243.0px;font-size:10.5px;transform:scaleX(1.147);color:#3b3b3b">5</span>
<div class="rs" style="top:273px"></div>
<span class="t" style="left:2.1px;transform-origin:0 50%;top:258.0px;font-size:10.5px;transform:scaleX(1.147);color:#3b3b3b">6</span>
<div class="rs" style="top:288px"></div>
<span class="t" style="left:2.1px;transform-origin:0 50%;top:273.0px;font-size:10.5px;transform:scaleX(1.147);color:#3b3b3b">7</span>
<div class="rs" style="top:303px"></div>
<span class="t" style="left:2.1px;transform-origin:0 50%;top:288.0px;font-size:10.5px;transform:scaleX(1.147);color:#3b3b3b">8</span>
<div class="rs" style="top:318px"></div>
<span class="t" style="left:2.1px;transform-origin:0 50%;top:303.0px;font-size:10.5px;transform:scaleX(1.147);color:#3b3b3b">9</span>
<div class="rs" style="top:333px"></div>
<span class="t" style="left:0.7px;transform-origin:0 50%;top:318.0px;font-size:10.5px;transform:scaleX(0.984);color:#3b3b3b">10</span>
<div class="rs" style="top:348px"></div>
<span class="t" style="left:0.7px;transform-origin:0 50%;top:333.0px;font-size:10.5px;transform:scaleX(1.054);color:#3b3b3b">11</span>
<div class="rs" style="top:363px"></div>
<span class="t" style="left:0.7px;transform-origin:0 50%;top:348.0px;font-size:10.5px;transform:scaleX(0.984);color:#3b3b3b">12</span>
<div class="rs" style="top:378px"></div>
<span class="t" style="left:0.7px;transform-origin:0 50%;top:363.0px;font-size:10.5px;transform:scaleX(0.984);color:#3b3b3b">13</span>
<div class="rs" style="top:393px"></div>
<span class="t" style="left:0.7px;transform-origin:0 50%;top:378.0px;font-size:10.5px;transform:scaleX(0.984);color:#3b3b3b">14</span>
<div class="rs" style="top:408px"></div>
<span class="t" style="left:0.7px;transform-origin:0 50%;top:393.0px;font-size:10.5px;transform:scaleX(0.984);color:#3b3b3b">15</span>
<div class="rs" style="top:423px"></div>
<span class="t" style="left:0.7px;transform-origin:0 50%;top:408.0px;font-size:10.5px;transform:scaleX(0.984);color:#3b3b3b">16</span>
<div class="rs" style="top:438px"></div>
<span class="t" style="left:0.7px;transform-origin:0 50%;top:423.0px;font-size:10.5px;transform:scaleX(0.984);color:#3b3b3b">17</span>
<div class="rs" style="top:453px"></div>
<span class="t" style="left:0.7px;transform-origin:0 50%;top:438.0px;font-size:10.5px;transform:scaleX(0.984);color:#3b3b3b">18</span>
<div class="rs" style="top:468px"></div>
<span class="t" style="left:0.7px;transform-origin:0 50%;top:453.0px;font-size:10.5px;transform:scaleX(0.984);color:#3b3b3b">19</span>
<div class="rs" style="top:483px"></div>
<span class="t" style="left:0.7px;transform-origin:0 50%;top:468.0px;font-size:10.5px;transform:scaleX(0.984);color:#3b3b3b">20</span>
<div class="rs" style="top:498px"></div>
<span class="t" style="left:0.7px;transform-origin:0 50%;top:483.0px;font-size:10.5px;transform:scaleX(0.984);color:#3b3b3b">21</span>
<div class="rs" style="top:513px"></div>
<span class="t" style="left:0.7px;transform-origin:0 50%;top:498.0px;font-size:10.5px;transform:scaleX(0.984);color:#3b3b3b">22</span>
<div class="rs" style="top:528px"></div>
<span class="t" style="left:0.7px;transform-origin:0 50%;top:513.0px;font-size:10.5px;transform:scaleX(0.984);color:#3b3b3b">23</span>
<div class="rs" style="top:543px"></div>
<span class="t" style="left:0.7px;transform-origin:0 50%;top:528.0px;font-size:10.5px;transform:scaleX(0.984);color:#3b3b3b">24</span>
<div class="rs" style="top:558px"></div>
<span class="t" style="left:0.7px;transform-origin:0 50%;top:543.0px;font-size:10.5px;transform:scaleX(0.984);color:#3b3b3b">25</span>
<div class="rs" style="top:573px"></div>
<span class="t" style="left:0.7px;transform-origin:0 50%;top:558.0px;font-size:10.5px;transform:scaleX(0.984);color:#3b3b3b">26</span>
<div class="rs" style="top:588px"></div>
<span class="t" style="left:0.7px;transform-origin:0 50%;top:573.0px;font-size:10.5px;transform:scaleX(0.984);color:#3b3b3b">27</span>
<div class="rs" style="top:603px"></div>
<span class="t" style="left:0.7px;transform-origin:0 50%;top:588.0px;font-size:10.5px;transform:scaleX(0.984);color:#3b3b3b">28</span>
<div class="rs" style="top:618px"></div>
<span class="t" style="left:0.7px;transform-origin:0 50%;top:603.0px;font-size:10.5px;transform:scaleX(0.984);color:#3b3b3b">29</span>
<div class="rs" style="top:633px"></div>
<span class="t" style="left:0.7px;transform-origin:0 50%;top:618.0px;font-size:10.5px;transform:scaleX(0.984);color:#3b3b3b">30</span>
<div class="rs" style="top:648px"></div>
<span class="t" style="left:0.7px;transform-origin:0 50%;top:633.0px;font-size:10.5px;transform:scaleX(0.984);color:#3b3b3b">31</span>
<span class="t" style="left:0.7px;transform-origin:0 50%;top:648.0px;font-size:10.5px;transform:scaleX(0.984);color:#3b3b3b">32</span>
<span class="t" style="left:83.5px;transform-origin:0 50%;top:288.0px;font-size:11px;transform:scaleX(1.035);font-weight:bold">¿Qué día es hoy?</span>
<span class="t" style="left:188.5px;transform-origin:0 50%;top:288.0px;font-size:11px;transform:scaleX(1.108);font-weight:bold">Fórmula HOY</span>
<span class="t" style="left:83.5px;transform-origin:0 50%;top:303.0px;font-size:11px;transform:scaleX(1.042);font-weight:bold">¿Día y hora?</span>
<span class="t" style="left:188.5px;transform-origin:0 50%;top:303.0px;font-size:11px;transform:scaleX(1.087);font-weight:bold">Fórmula AHORA</span>
<div style="left:559px;top:288px;width:110px;height:31px;background:#0df18f"></div>
<span class="t" style="right:695.3px;transform-origin:100% 50%;top:288.0px;font-size:11px;transform:scaleX(1.261);font-weight:bold;color:#06331f">19/1/2026</span>
<span class="t" style="right:695.3px;transform-origin:100% 50%;top:303.0px;font-size:11px;transform:scaleX(1.203);font-weight:bold;color:#06331f">19/1/2026 10:53</span>
<div style="left:81px;top:363px;width:1240px;height:16px;background:#0df18f;border:1px solid #1a1a1a"></div>
<div style="left:186px;top:363px;width:1px;height:16px;background:#1a1a1a"></div>
<div style="left:559px;top:363px;width:1px;height:16px;background:#1a1a1a"></div>
<div style="left:668px;top:363px;width:1px;height:16px;background:#1a1a1a"></div>
<div style="left:735px;top:363px;width:1px;height:16px;background:#1a1a1a"></div>
<div style="left:799px;top:363px;width:1px;height:16px;background:#1a1a1a"></div>
<div style="left:863px;top:363px;width:1px;height:16px;background:#1a1a1a"></div>
<div style="left:924px;top:363px;width:1px;height:16px;background:#1a1a1a"></div>
<div style="left:988px;top:363px;width:1px;height:16px;background:#1a1a1a"></div>
<div style="left:1058px;top:363px;width:1px;height:16px;background:#1a1a1a"></div>
<div style="left:1122px;top:363px;width:1px;height:16px;background:#1a1a1a"></div>
<div style="left:1186px;top:363px;width:1px;height:16px;background:#1a1a1a"></div>
<div style="left:1250px;top:363px;width:1px;height:16px;background:#1a1a1a"></div>
<span class="t" style="left:133.9px;margin-left:-25.4px;transform-origin:50% 50%;top:364.0px;font-size:11px;transform:scaleX(1.101);font-weight:bold;color:#06331f">Categoría</span>
<span class="t" style="left:372.7px;margin-left:-31.5px;transform-origin:50% 50%;top:364.0px;font-size:11px;transform:scaleX(1.039);font-weight:bold;color:#06331f">Descripción</span>
<span class="t" style="left:613.7px;margin-left:-39.7px;transform-origin:50% 50%;top:364.0px;font-size:11px;transform:scaleX(1.049);font-weight:bold;color:#06331f">Fecha de inicio</span>
<span class="t" style="left:701.5px;margin-left:-23.8px;transform-origin:50% 50%;top:364.0px;font-size:11px;transform:scaleX(1.088);font-weight:bold;color:#06331f">Fecha de</span>
<span class="t" style="left:768.0px;margin-left:-9.5px;transform-origin:50% 50%;top:364.0px;font-size:11px;transform:scaleX(1.208);font-weight:bold;color:#06331f">DIA</span>
<span class="t" style="left:831.5px;margin-left:-21.4px;transform-origin:50% 50%;top:364.0px;font-size:11px;transform:scaleX(1.073);font-weight:bold;color:#06331f">DIASEM</span>
<span class="t" style="left:894.0px;margin-left:-9.5px;transform-origin:50% 50%;top:364.0px;font-size:11px;transform:scaleX(1.208);font-weight:bold;color:#06331f">DÍA</span>
<span class="t" style="left:956.7px;margin-left:-11.9px;transform-origin:50% 50%;top:364.0px;font-size:11px;transform:scaleX(1.065);font-weight:bold;color:#06331f">MES</span>
<span class="t" style="left:1023.0px;margin-left:-31.7px;transform-origin:50% 50%;top:364.0px;font-size:11px;transform:scaleX(1.024);font-weight:bold;color:#06331f">MES TEXTO</span>
<span class="t" style="left:1090.0px;margin-left:-12.2px;transform-origin:50% 50%;top:364.0px;font-size:11px;transform:scaleX(1.100);font-weight:bold;color:#06331f">AÑO</span>
<span class="t" style="left:1153.7px;margin-left:-13.1px;transform-origin:50% 50%;top:364.0px;font-size:11px;transform:scaleX(1.119);font-weight:bold;color:#06331f">DÍAS</span>
<span class="t" style="left:1218.5px;margin-left:-26.0px;transform-origin:50% 50%;top:364.0px;font-size:11px;transform:scaleX(1.037);font-weight:bold;color:#06331f">DÍAS LAB</span>
<span class="t" style="left:1285.0px;margin-left:-11.6px;transform-origin:50% 50%;top:364.0px;font-size:11px;transform:scaleX(1.071);font-weight:bold;color:#06331f">Días</span>
<span class="t" style="left:84.0px;transform-origin:0 50%;top:378.0px;font-size:11px;transform:scaleX(1.100);">Proyecto 1</span>
<span class="t" style="left:189.0px;transform-origin:0 50%;top:378.0px;font-size:11px;transform:scaleX(1.100);">Rediseño app de finanzas personales para startup fintech</span>
<span class="t" style="right:695.5px;transform-origin:100% 50%;top:378.0px;font-size:11px;transform:scaleX(1.205);">23/5/2025</span>
<span class="t" style="right:628.5px;transform-origin:100% 50%;top:378.0px;font-size:11px;transform:scaleX(1.205);">8/6/2025</span>
<span class="t" style="right:564.5px;transform-origin:100% 50%;top:378.0px;font-size:11px;transform:scaleX(1.120);">8</span>
<span class="t" style="right:500.5px;transform-origin:100% 50%;top:378.0px;font-size:11px;transform:scaleX(1.120);">2</span>
<span class="t" style="left:866.0px;transform-origin:0 50%;top:378.0px;font-size:11px;transform:scaleX(1.100);">domingo</span>
<span class="t" style="right:375.5px;transform-origin:100% 50%;top:378.0px;font-size:11px;transform:scaleX(1.120);">6</span>
<span class="t" style="left:991.0px;transform-origin:0 50%;top:378.0px;font-size:11px;transform:scaleX(1.100);">junio</span>
<span class="t" style="right:241.5px;transform-origin:100% 50%;top:378.0px;font-size:11px;transform:scaleX(1.120);">2025</span>
<span class="t" style="right:177.5px;transform-origin:100% 50%;top:378.0px;font-size:11px;transform:scaleX(1.120);">16</span>
<span class="t" style="right:113.5px;transform-origin:100% 50%;top:378.0px;font-size:11px;transform:scaleX(1.120);">-10</span>
<span class="t" style="right:43.5px;transform-origin:100% 50%;top:378.0px;font-size:11px;transform:scaleX(1.120);">225</span>
<span class="t" style="left:84.0px;transform-origin:0 50%;top:393.0px;font-size:11px;transform:scaleX(1.100);">Proyecto 2</span>
<span class="t" style="left:189.0px;transform-origin:0 50%;top:393.0px;font-size:11px;transform:scaleX(1.100);">Diseño de dashboard para monitoreo de métricas en e-commerce</span>
<span class="t" style="right:695.5px;transform-origin:100% 50%;top:393.0px;font-size:11px;transform:scaleX(1.205);">15/5/2025</span>
<span class="t" style="right:628.5px;transform-origin:100% 50%;top:393.0px;font-size:11px;transform:scaleX(1.205);">20/5/2025</span>
<span class="t" style="right:564.5px;transform-origin:100% 50%;top:393.0px;font-size:11px;transform:scaleX(1.120);">20</span>
<span class="t" style="right:500.5px;transform-origin:100% 50%;top:393.0px;font-size:11px;transform:scaleX(1.120);">7</span>
<span class="t" style="left:866.0px;transform-origin:0 50%;top:393.0px;font-size:11px;transform:scaleX(1.100);">martes</span>
<span class="t" style="right:375.5px;transform-origin:100% 50%;top:393.0px;font-size:11px;transform:scaleX(1.120);">5</span>
<span class="t" style="left:991.0px;transform-origin:0 50%;top:393.0px;font-size:11px;transform:scaleX(1.100);">mayo</span>
<span class="t" style="right:241.5px;transform-origin:100% 50%;top:393.0px;font-size:11px;transform:scaleX(1.120);">2025</span>
<span class="t" style="right:177.5px;transform-origin:100% 50%;top:393.0px;font-size:11px;transform:scaleX(1.120);">5</span>
<span class="t" style="right:113.5px;transform-origin:100% 50%;top:393.0px;font-size:11px;transform:scaleX(1.120);">-4</span>
<span class="t" style="right:43.5px;transform-origin:100% 50%;top:393.0px;font-size:11px;transform:scaleX(1.120);">244</span>
<span class="t" style="left:84.0px;transform-origin:0 50%;top:408.0px;font-size:11px;transform:scaleX(1.100);">Proyecto 3</span>
<span class="t" style="left:189.0px;transform-origin:0 50%;top:408.0px;font-size:11px;transform:scaleX(1.100);">Investigación UX para aplicación de salud mental</span>
<span class="t" style="right:695.5px;transform-origin:100% 50%;top:408.0px;font-size:11px;transform:scaleX(1.205);">20/6/2025</span>
<span class="t" style="right:628.5px;transform-origin:100% 50%;top:408.0px;font-size:11px;transform:scaleX(1.205);">20/7/2025</span>
<span class="t" style="right:564.5px;transform-origin:100% 50%;top:408.0px;font-size:11px;transform:scaleX(1.120);">20</span>
<span class="t" style="right:500.5px;transform-origin:100% 50%;top:408.0px;font-size:11px;transform:scaleX(1.120);">6</span>
<span class="t" style="left:866.0px;transform-origin:0 50%;top:408.0px;font-size:11px;transform:scaleX(1.100);">domingo</span>
<span class="t" style="right:375.5px;transform-origin:100% 50%;top:408.0px;font-size:11px;transform:scaleX(1.120);">7</span>
<span class="t" style="left:991.0px;transform-origin:0 50%;top:408.0px;font-size:11px;transform:scaleX(1.100);">julio</span>
<span class="t" style="right:241.5px;transform-origin:100% 50%;top:408.0px;font-size:11px;transform:scaleX(1.120);">2025</span>
<span class="t" style="right:177.5px;transform-origin:100% 50%;top:408.0px;font-size:11px;transform:scaleX(1.120);">30</span>
<span class="t" style="right:113.5px;transform-origin:100% 50%;top:408.0px;font-size:11px;transform:scaleX(1.120);">-18</span>
<span class="t" style="right:43.5px;transform-origin:100% 50%;top:408.0px;font-size:11px;transform:scaleX(1.120);">183</span>
<span class="t" style="left:84.0px;transform-origin:0 50%;top:423.0px;font-size:11px;transform:scaleX(1.100);">Proyecto 4</span>
<span class="t" style="left:189.0px;transform-origin:0 50%;top:423.0px;font-size:11px;transform:scaleX(1.100);">Wireframes para sistema de gestión de clínicas dentales</span>
<span class="t" style="right:695.5px;transform-origin:100% 50%;top:423.0px;font-size:11px;transform:scaleX(1.205);">17/6/2025</span>
<span class="t" style="right:628.5px;transform-origin:100% 50%;top:423.0px;font-size:11px;transform:scaleX(1.205);">12/7/2025</span>
<span class="t" style="right:564.5px;transform-origin:100% 50%;top:423.0px;font-size:11px;transform:scaleX(1.120);">12</span>
<span class="t" style="right:500.5px;transform-origin:100% 50%;top:423.0px;font-size:11px;transform:scaleX(1.120);">4</span>
<span class="t" style="left:866.0px;transform-origin:0 50%;top:423.0px;font-size:11px;transform:scaleX(1.100);">sábado</span>
<span class="t" style="right:375.5px;transform-origin:100% 50%;top:423.0px;font-size:11px;transform:scaleX(1.120);">7</span>
<span class="t" style="left:991.0px;transform-origin:0 50%;top:423.0px;font-size:11px;transform:scaleX(1.100);">julio</span>
<span class="t" style="right:241.5px;transform-origin:100% 50%;top:423.0px;font-size:11px;transform:scaleX(1.120);">2025</span>
<span class="t" style="right:177.5px;transform-origin:100% 50%;top:423.0px;font-size:11px;transform:scaleX(1.120);">25</span>
<span class="t" style="right:113.5px;transform-origin:100% 50%;top:423.0px;font-size:11px;transform:scaleX(1.120);">-17</span>
<span class="t" style="right:43.5px;transform-origin:100% 50%;top:423.0px;font-size:11px;transform:scaleX(1.120);">191</span>
<span class="t" style="left:84.0px;transform-origin:0 50%;top:438.0px;font-size:11px;transform:scaleX(1.100);">Proyecto 5</span>
<span class="t" style="left:189.0px;transform-origin:0 50%;top:438.0px;font-size:11px;transform:scaleX(1.100);">Prototipado de plataforma educativa para niños</span>
<span class="t" style="right:695.5px;transform-origin:100% 50%;top:438.0px;font-size:11px;transform:scaleX(1.205);">18/5/2025</span>
<span class="t" style="right:628.5px;transform-origin:100% 50%;top:438.0px;font-size:11px;transform:scaleX(1.205);">5/6/2025</span>
<span class="t" style="right:564.5px;transform-origin:100% 50%;top:438.0px;font-size:11px;transform:scaleX(1.120);">5</span>
<span class="t" style="right:500.5px;transform-origin:100% 50%;top:438.0px;font-size:11px;transform:scaleX(1.120);">2</span>
<span class="t" style="left:866.0px;transform-origin:0 50%;top:438.0px;font-size:11px;transform:scaleX(1.100);">jueves</span>
<span class="t" style="right:375.5px;transform-origin:100% 50%;top:438.0px;font-size:11px;transform:scaleX(1.120);">6</span>
<span class="t" style="left:991.0px;transform-origin:0 50%;top:438.0px;font-size:11px;transform:scaleX(1.100);">junio</span>
<span class="t" style="right:241.5px;transform-origin:100% 50%;top:438.0px;font-size:11px;transform:scaleX(1.120);">2025</span>
<span class="t" style="right:177.5px;transform-origin:100% 50%;top:438.0px;font-size:11px;transform:scaleX(1.120);">18</span>
<span class="t" style="right:113.5px;transform-origin:100% 50%;top:438.0px;font-size:11px;transform:scaleX(1.120);">-13</span>
<span class="t" style="right:43.5px;transform-origin:100% 50%;top:438.0px;font-size:11px;transform:scaleX(1.120);">228</span>
<span class="t" style="left:84.0px;transform-origin:0 50%;top:453.0px;font-size:11px;transform:scaleX(1.100);">Proyecto 6</span>
<span class="t" style="left:189.0px;transform-origin:0 50%;top:453.0px;font-size:11px;transform:scaleX(1.100);">Optimización de experiencia de onboarding para app de delivery</span>
<span class="t" style="right:695.5px;transform-origin:100% 50%;top:453.0px;font-size:11px;transform:scaleX(1.205);">23/6/2025</span>
<span class="t" style="right:628.5px;transform-origin:100% 50%;top:453.0px;font-size:11px;transform:scaleX(1.205);">15/7/2025</span>
<span class="t" style="right:564.5px;transform-origin:100% 50%;top:453.0px;font-size:11px;transform:scaleX(1.120);">15</span>
<span class="t" style="right:500.5px;transform-origin:100% 50%;top:453.0px;font-size:11px;transform:scaleX(1.120);">3</span>
<span class="t" style="left:866.0px;transform-origin:0 50%;top:453.0px;font-size:11px;transform:scaleX(1.100);">martes</span>
<span class="t" style="right:375.5px;transform-origin:100% 50%;top:453.0px;font-size:11px;transform:scaleX(1.120);">7</span>
<span class="t" style="left:991.0px;transform-origin:0 50%;top:453.0px;font-size:11px;transform:scaleX(1.100);">julio</span>
<span class="t" style="right:241.5px;transform-origin:100% 50%;top:453.0px;font-size:11px;transform:scaleX(1.120);">2025</span>
<span class="t" style="right:177.5px;transform-origin:100% 50%;top:453.0px;font-size:11px;transform:scaleX(1.120);">22</span>
<span class="t" style="right:113.5px;transform-origin:100% 50%;top:453.0px;font-size:11px;transform:scaleX(1.120);">-15</span>
<span class="t" style="right:43.5px;transform-origin:100% 50%;top:453.0px;font-size:11px;transform:scaleX(1.120);">188</span>
<span class="t" style="left:84.0px;transform-origin:0 50%;top:468.0px;font-size:11px;transform:scaleX(1.100);">Proyecto 7</span>
<span class="t" style="left:189.0px;transform-origin:0 50%;top:468.0px;font-size:11px;transform:scaleX(1.100);">Análisis de usabilidad en sitio web de moda</span>
<span class="t" style="right:695.5px;transform-origin:100% 50%;top:468.0px;font-size:11px;transform:scaleX(1.205);">12/5/2025</span>
<span class="t" style="right:628.5px;transform-origin:100% 50%;top:468.0px;font-size:11px;transform:scaleX(1.205);">28/5/2025</span>
<span class="t" style="right:564.5px;transform-origin:100% 50%;top:468.0px;font-size:11px;transform:scaleX(1.120);">28</span>
<span class="t" style="right:500.5px;transform-origin:100% 50%;top:468.0px;font-size:11px;transform:scaleX(1.120);">1</span>
<span class="t" style="left:866.0px;transform-origin:0 50%;top:468.0px;font-size:11px;transform:scaleX(1.100);">miércoles</span>
<span class="t" style="right:375.5px;transform-origin:100% 50%;top:468.0px;font-size:11px;transform:scaleX(1.120);">5</span>
<span class="t" style="left:991.0px;transform-origin:0 50%;top:468.0px;font-size:11px;transform:scaleX(1.100);">mayo</span>
<span class="t" style="right:241.5px;transform-origin:100% 50%;top:468.0px;font-size:11px;transform:scaleX(1.120);">2025</span>
<span class="t" style="right:177.5px;transform-origin:100% 50%;top:468.0px;font-size:11px;transform:scaleX(1.120);">16</span>
<span class="t" style="right:113.5px;transform-origin:100% 50%;top:468.0px;font-size:11px;transform:scaleX(1.120);">-13</span>
<span class="t" style="right:43.5px;transform-origin:100% 50%;top:468.0px;font-size:11px;transform:scaleX(1.120);">236</span>
<span class="t" style="left:84.0px;transform-origin:0 50%;top:483.0px;font-size:11px;transform:scaleX(1.100);">Proyecto 8</span>
<span class="t" style="left:189.0px;transform-origin:0 50%;top:483.0px;font-size:11px;transform:scaleX(1.100);">Consultoría freelance para tienda online de maquillaje</span>
<span class="t" style="right:695.5px;transform-origin:100% 50%;top:483.0px;font-size:11px;transform:scaleX(1.205);">17/5/2025</span>
<span class="t" style="right:628.5px;transform-origin:100% 50%;top:483.0px;font-size:11px;transform:scaleX(1.205);">2/6/2025</span>
<span class="t" style="right:564.5px;transform-origin:100% 50%;top:483.0px;font-size:11px;transform:scaleX(1.120);">2</span>
<span class="t" style="right:500.5px;transform-origin:100% 50%;top:483.0px;font-size:11px;transform:scaleX(1.120);">3</span>
<span class="t" style="left:866.0px;transform-origin:0 50%;top:483.0px;font-size:11px;transform:scaleX(1.100);">lunes</span>
<span class="t" style="right:375.5px;transform-origin:100% 50%;top:483.0px;font-size:11px;transform:scaleX(1.120);">6</span>
<span class="t" style="left:991.0px;transform-origin:0 50%;top:483.0px;font-size:11px;transform:scaleX(1.100);">junio</span>
<span class="t" style="right:241.5px;transform-origin:100% 50%;top:483.0px;font-size:11px;transform:scaleX(1.120);">2025</span>
<span class="t" style="right:177.5px;transform-origin:100% 50%;top:483.0px;font-size:11px;transform:scaleX(1.120);">16</span>
<span class="t" style="right:113.5px;transform-origin:100% 50%;top:483.0px;font-size:11px;transform:scaleX(1.120);">-11</span>
<span class="t" style="right:43.5px;transform-origin:100% 50%;top:483.0px;font-size:11px;transform:scaleX(1.120);">231</span>
<span class="t" style="left:84.0px;transform-origin:0 50%;top:498.0px;font-size:11px;transform:scaleX(1.100);">Proyecto 9</span>
<span class="t" style="left:189.0px;transform-origin:0 50%;top:498.0px;font-size:11px;transform:scaleX(1.100);">UX audit para plataforma de reservas de hoteles</span>
<span class="t" style="right:695.5px;transform-origin:100% 50%;top:498.0px;font-size:11px;transform:scaleX(1.205);">19/6/2025</span>
<span class="t" style="right:628.5px;transform-origin:100% 50%;top:498.0px;font-size:11px;transform:scaleX(1.205);">2/7/2025</span>
<span class="t" style="right:564.5px;transform-origin:100% 50%;top:498.0px;font-size:11px;transform:scaleX(1.120);">2</span>
<span class="t" style="right:500.5px;transform-origin:100% 50%;top:498.0px;font-size:11px;transform:scaleX(1.120);">4</span>
<span class="t" style="left:866.0px;transform-origin:0 50%;top:498.0px;font-size:11px;transform:scaleX(1.100);">miércoles</span>
<span class="t" style="right:375.5px;transform-origin:100% 50%;top:498.0px;font-size:11px;transform:scaleX(1.120);">7</span>
<span class="t" style="left:991.0px;transform-origin:0 50%;top:498.0px;font-size:11px;transform:scaleX(1.100);">julio</span>
<span class="t" style="right:241.5px;transform-origin:100% 50%;top:498.0px;font-size:11px;transform:scaleX(1.120);">2025</span>
<span class="t" style="right:177.5px;transform-origin:100% 50%;top:498.0px;font-size:11px;transform:scaleX(1.120);">13</span>
<span class="t" style="right:113.5px;transform-origin:100% 50%;top:498.0px;font-size:11px;transform:scaleX(1.120);">-9</span>
<span class="t" style="right:43.5px;transform-origin:100% 50%;top:498.0px;font-size:11px;transform:scaleX(1.120);">201</span>
<span class="t" style="left:84.0px;transform-origin:0 50%;top:513.0px;font-size:11px;transform:scaleX(1.100);">Proyecto 10</span>
<span class="t" style="left:189.0px;transform-origin:0 50%;top:513.0px;font-size:11px;transform:scaleX(1.100);">Diseño de interfaz para app de seguimiento de hábitos</span>
<span class="t" style="right:695.5px;transform-origin:100% 50%;top:513.0px;font-size:11px;transform:scaleX(1.205);">26/5/2025</span>
<span class="t" style="right:628.5px;transform-origin:100% 50%;top:513.0px;font-size:11px;transform:scaleX(1.205);">5/6/2025</span>
<span class="t" style="right:564.5px;transform-origin:100% 50%;top:513.0px;font-size:11px;transform:scaleX(1.120);">5</span>
<span class="t" style="right:500.5px;transform-origin:100% 50%;top:513.0px;font-size:11px;transform:scaleX(1.120);">6</span>
<span class="t" style="left:866.0px;transform-origin:0 50%;top:513.0px;font-size:11px;transform:scaleX(1.100);">jueves</span>
<span class="t" style="right:375.5px;transform-origin:100% 50%;top:513.0px;font-size:11px;transform:scaleX(1.120);">6</span>
<span class="t" style="left:991.0px;transform-origin:0 50%;top:513.0px;font-size:11px;transform:scaleX(1.100);">junio</span>
<span class="t" style="right:241.5px;transform-origin:100% 50%;top:513.0px;font-size:11px;transform:scaleX(1.120);">2025</span>
<span class="t" style="right:177.5px;transform-origin:100% 50%;top:513.0px;font-size:11px;transform:scaleX(1.120);">10</span>
<span class="t" style="right:113.5px;transform-origin:100% 50%;top:513.0px;font-size:11px;transform:scaleX(1.120);">-8</span>
<span class="t" style="right:43.5px;transform-origin:100% 50%;top:513.0px;font-size:11px;transform:scaleX(1.120);">228</span>
<span class="t" style="left:84.0px;transform-origin:0 50%;top:528.0px;font-size:11px;transform:scaleX(1.100);">Proyecto 11</span>
<span class="t" style="left:189.0px;transform-origin:0 50%;top:528.0px;font-size:11px;transform:scaleX(1.100);">Colaboración con equipo de desarrollo en app de citas</span>
<span class="t" style="right:695.5px;transform-origin:100% 50%;top:528.0px;font-size:11px;transform:scaleX(1.205);">12/5/2025</span>
<span class="t" style="right:628.5px;transform-origin:100% 50%;top:528.0px;font-size:11px;transform:scaleX(1.205);">7/6/2025</span>
<span class="t" style="right:564.5px;transform-origin:100% 50%;top:528.0px;font-size:11px;transform:scaleX(1.120);">7</span>
<span class="t" style="right:500.5px;transform-origin:100% 50%;top:528.0px;font-size:11px;transform:scaleX(1.120);">1</span>
<span class="t" style="left:866.0px;transform-origin:0 50%;top:528.0px;font-size:11px;transform:scaleX(1.100);">sábado</span>
<span class="t" style="right:375.5px;transform-origin:100% 50%;top:528.0px;font-size:11px;transform:scaleX(1.120);">6</span>
<span class="t" style="left:991.0px;transform-origin:0 50%;top:528.0px;font-size:11px;transform:scaleX(1.100);">junio</span>
<span class="t" style="right:241.5px;transform-origin:100% 50%;top:528.0px;font-size:11px;transform:scaleX(1.120);">2025</span>
<span class="t" style="right:177.5px;transform-origin:100% 50%;top:528.0px;font-size:11px;transform:scaleX(1.120);">26</span>
<span class="t" style="right:113.5px;transform-origin:100% 50%;top:528.0px;font-size:11px;transform:scaleX(1.120);">-19</span>
<span class="t" style="right:43.5px;transform-origin:100% 50%;top:528.0px;font-size:11px;transform:scaleX(1.120);">226</span>
<span class="t" style="left:84.0px;transform-origin:0 50%;top:543.0px;font-size:11px;transform:scaleX(1.100);">Proyecto 12</span>
<span class="t" style="left:189.0px;transform-origin:0 50%;top:543.0px;font-size:11px;transform:scaleX(1.100);">Creación de sistema de diseño para proyecto corporativo</span>
<span class="t" style="right:695.5px;transform-origin:100% 50%;top:543.0px;font-size:11px;transform:scaleX(1.205);">10/6/2025</span>
<span class="t" style="right:628.5px;transform-origin:100% 50%;top:543.0px;font-size:11px;transform:scaleX(1.205);">16/6/2025</span>
<span class="t" style="right:564.5px;transform-origin:100% 50%;top:543.0px;font-size:11px;transform:scaleX(1.120);">16</span>
<span class="t" style="right:500.5px;transform-origin:100% 50%;top:543.0px;font-size:11px;transform:scaleX(1.120);">6</span>
<span class="t" style="left:866.0px;transform-origin:0 50%;top:543.0px;font-size:11px;transform:scaleX(1.100);">lunes</span>
<span class="t" style="right:375.5px;transform-origin:100% 50%;top:543.0px;font-size:11px;transform:scaleX(1.120);">6</span>
<span class="t" style="left:991.0px;transform-origin:0 50%;top:543.0px;font-size:11px;transform:scaleX(1.100);">junio</span>
<span class="t" style="right:241.5px;transform-origin:100% 50%;top:543.0px;font-size:11px;transform:scaleX(1.120);">2025</span>
<span class="t" style="right:177.5px;transform-origin:100% 50%;top:543.0px;font-size:11px;transform:scaleX(1.120);">6</span>
<span class="t" style="right:113.5px;transform-origin:100% 50%;top:543.0px;font-size:11px;transform:scaleX(1.120);">-5</span>
<span class="t" style="right:43.5px;transform-origin:100% 50%;top:543.0px;font-size:11px;transform:scaleX(1.120);">217</span>
<div style="left:66px;top:264px;width:628px;height:19px;background:#8e8e8e;filter:blur(4.5px);opacity:.62;border-radius:6px"></div>
<div style="left:57px;top:200px;width:629px;height:67px;background:#0df18f;border-radius:9px"></div>
<span class="t" style="left:67.3px;transform-origin:0 50%;top:213.6px;font-size:33px;height:42px;line-height:42px;transform:scaleX(1.016);color:#0b1f17">Funciones de Fecha</span>
<svg style="left:742px;top:189px" width="76" height="88" viewBox="0 0 76 88"><defs><linearGradient id="cg" x1="0" y1="0" x2="0" y2="1"><stop offset="0" stop-color="#f7f7f7"/><stop offset=".7" stop-color="#e6e7e8"/><stop offset="1" stop-color="#cfd1d3"/></linearGradient><linearGradient id="rg" x1="0" y1="0" x2="0" y2="1"><stop offset="0" stop-color="#ee3338"/><stop offset="1" stop-color="#d9242b"/></linearGradient><filter id="cb" x="-20%" y="-50%" width="140%" height="200%"><feGaussianBlur stdDeviation="1.2"/></filter></defs><ellipse cx="37.500" cy="84" rx="30" ry="1.600" fill="#9a9a9a" filter="url(#cb)" opacity=".7"/><rect x="2.500" y="7" width="70" height="77.300" rx="3" fill="url(#cg)"/><path d="M2.500 26V10a3 3 0 0 1 3-3h64a3 3 0 0 1 3 3v16z" fill="url(#rg)"/><rect x="11" y="32" width="52.600" height="41.200" fill="#fff" stroke="#d0d0d0" stroke-width=".4"/><path d="M18.51 32v41.200" stroke="#e4e4e4" stroke-width=".4"/><path d="M26.03 32v41.200" stroke="#e4e4e4" stroke-width=".4"/><path d="M33.54 32v41.200" stroke="#e4e4e4" stroke-width=".4"/><path d="M41.06 32v41.200" stroke="#e4e4e4" stroke-width=".4"/><path d="M48.57 32v41.200" stroke="#e4e4e4" stroke-width=".4"/><path d="M56.08 32v41.200" stroke="#e4e4e4" stroke-width=".4"/><path d="M11 40.24h52.600" stroke="#e4e4e4" stroke-width=".4"/><path d="M11 48.48h52.600" stroke="#e4e4e4" stroke-width=".4"/><path d="M11 56.72h52.600" stroke="#e4e4e4" stroke-width=".4"/><path d="M11 64.96h52.600" stroke="#e4e4e4" stroke-width=".4"/><rect x="15.5" y="2.300" width="2.200" height="9" rx="1.100" fill="#e9e9ea" stroke="#b9b9bb" stroke-width=".35"/><ellipse cx="16.6" cy="11.600" rx="1.500" ry="1" fill="#a81c22"/><rect x="23.9" y="2.300" width="2.200" height="9" rx="1.100" fill="#e9e9ea" stroke="#b9b9bb" stroke-width=".35"/><ellipse cx="25.0" cy="11.600" rx="1.500" ry="1" fill="#a81c22"/><rect x="32.2" y="2.300" width="2.200" height="9" rx="1.100" fill="#e9e9ea" stroke="#b9b9bb" stroke-width=".35"/><ellipse cx="33.3" cy="11.600" rx="1.500" ry="1" fill="#a81c22"/><rect x="40.6" y="2.300" width="2.200" height="9" rx="1.100" fill="#e9e9ea" stroke="#b9b9bb" stroke-width=".35"/><ellipse cx="41.7" cy="11.600" rx="1.500" ry="1" fill="#a81c22"/><rect x="48.9" y="2.300" width="2.200" height="9" rx="1.100" fill="#e9e9ea" stroke="#b9b9bb" stroke-width=".35"/><ellipse cx="50.0" cy="11.600" rx="1.500" ry="1" fill="#a81c22"/><rect x="57.3" y="2.300" width="2.200" height="9" rx="1.100" fill="#e9e9ea" stroke="#b9b9bb" stroke-width=".35"/><ellipse cx="58.4" cy="11.600" rx="1.500" ry="1" fill="#a81c22"/><text x="5.300" y="24.300" font-family="Liberation Sans, sans-serif" font-weight="bold" font-size="6.800" fill="#fff" textLength="32.700" lengthAdjust="spacingAndGlyphs">CALENDAR</text><g font-family="Liberation Sans, sans-serif" font-size="4.200" font-weight="bold" fill="#4a4a4a" text-anchor="end"><text x="47.8" y="36.9">1</text><text x="55.3" y="36.9">2</text><text x="62.8" y="36.9">3</text><text x="17.7" y="45.1">4</text><text x="25.2" y="45.1">5</text><text x="32.7" y="45.1">6</text><text x="40.3" y="45.1">7</text><text x="47.8" y="45.1">8</text><text x="55.3" y="45.1">9</text><text x="62.8" y="45.1">10</text><text x="17.7" y="53.4">11</text><text x="25.2" y="53.4">12</text><text x="32.7" y="53.4">13</text><text x="40.3" y="53.4">14</text><text x="47.8" y="53.4">15</text><text x="55.3" y="53.4">16</text><text x="62.8" y="53.4">17</text><text x="17.7" y="61.6">18</text><text x="25.2" y="61.6">19</text><text x="32.7" y="61.6">20</text><text x="40.3" y="61.6">21</text><text x="47.8" y="61.6">22</text><text x="55.3" y="61.6">23</text><text x="62.8" y="61.6">24</text><text x="17.7" y="69.9">25</text><text x="25.2" y="69.9">26</text><text x="32.7" y="69.9">27</text><text x="40.3" y="69.9">28</text><text x="47.8" y="69.9">29</text><text x="55.3" y="69.9">30</text><text x="62.8" y="69.9">31</text></g></svg>
</div><div id="vscroll"></div><div style="left:1339px;top:184px;width:1px;height:469px;background:#9a9a9a"></div>
<div class="sbtn" style="left:1343px;top:170px;width:15px;height:15px"></div>
<svg style="left:1347px;top:175.500px" width="7" height="4" viewBox="0 0 9 5"><path d="M0 5h9L4.5 0z" fill="#111"/></svg>
<div class="sbtn" style="left:1343px;top:185px;width:15px;height:17px"></div>
<div class="sbtn" style="left:1343px;top:639px;width:15px;height:15px"></div>
<svg style="left:1347px;top:644.500px" width="7" height="4" viewBox="0 0 9 5"><path d="M0 0h9L4.5 5z" fill="#111"/></svg>
<div id="btm"></div><div id="status"></div><div style="left:1061px;top:681px;width:40px;height:2px;background:#dedede"></div>
<svg style="left:21px;top:662px" width="6" height="9" viewBox="0 0 6 9"><path d="M5.5 0.5v8L0.5 4.5z" fill="#c9c9c9"/></svg>
<svg style="left:50px;top:662px" width="6" height="9" viewBox="0 0 6 9"><path d="M0.5 0.5v8L5.5 4.5z" fill="#c9c9c9"/></svg>
<div style="left:95px;top:657px;width:1px;height:20px;background:#8a8a8a"></div>
<span class="t" style="left:107.5px;transform-origin:0 50%;top:658.0px;font-size:12.5px;transform:scaleX(1.095);color:#444">Intro</span>
<div style="left:149px;top:653px;width:125px;height:25px;background:#fff;border-left:1px solid #ababab;border-right:1px solid #ababab;border-bottom:2px solid #217346"></div>
<span class="t" style="left:161.2px;transform-origin:0 50%;top:658.0px;font-size:12.5px;transform:scaleX(0.991);color:#217346;font-weight:bold">Funciones Fecha</span>
<svg style="left:306px;top:658px" width="18" height="18" viewBox="0 0 18 18" fill="none" stroke="#6a6a6a" stroke-width="1.1"><circle cx="9" cy="9" r="7.5"/><path d="M9 5v8M5 9h8" stroke-width="1.4"/></svg>
<div style="left:814px;top:662px;width:2px;height:2px;background:#b5b5b5"></div>
<div style="left:814px;top:666px;width:2px;height:2px;background:#b5b5b5"></div>
<div style="left:814px;top:670px;width:2px;height:2px;background:#b5b5b5"></div>
<div style="left:831px;top:660px;width:510px;height:15px;background:#ededed"></div>
<div class="sbtn" style="left:831px;top:660px;width:15px;height:15px"></div>
<svg style="left:836.500px;top:664px" width="4" height="7" viewBox="0 0 5 9"><path d="M5 0v9L0 4.5z" fill="#111"/></svg>
<div class="sbtn" style="left:845px;top:660px;width:331px;height:15px"></div>
<div class="sbtn" style="left:1325px;top:660px;width:15px;height:15px"></div>
<svg style="left:1331px;top:664px" width="4" height="7" viewBox="0 0 5 9"><path d="M0 0v9L5 4.5z" fill="#111"/></svg>
<svg style="left:1119.5px;top:594px" width="68.4" height="78.3" viewBox="0 0 76 87" fill="none"><path d="M52 61.5L40.5 73a4 4 0 0 1-5.600 0L8.500 46.500a4 4 0 0 1 0-5.600L35 14.300a4 4 0 0 1 5.600 0L66.500 40.500a4 4 0 0 1 0 5.600L60 52.500" stroke="#b9d36a" stroke-opacity=".2" stroke-width="9.500" stroke-linecap="round" stroke-linejoin="round"/></svg>
<span class="t" style="left:1195.0px;transform-origin:0 50%;top:606.2px;font-size:58px;height:66px;line-height:66px;transform:scaleX(1.110);color:#000;opacity:.08;-webkit-text-stroke:1.2px #000">Platzi</span>
</body></html>
